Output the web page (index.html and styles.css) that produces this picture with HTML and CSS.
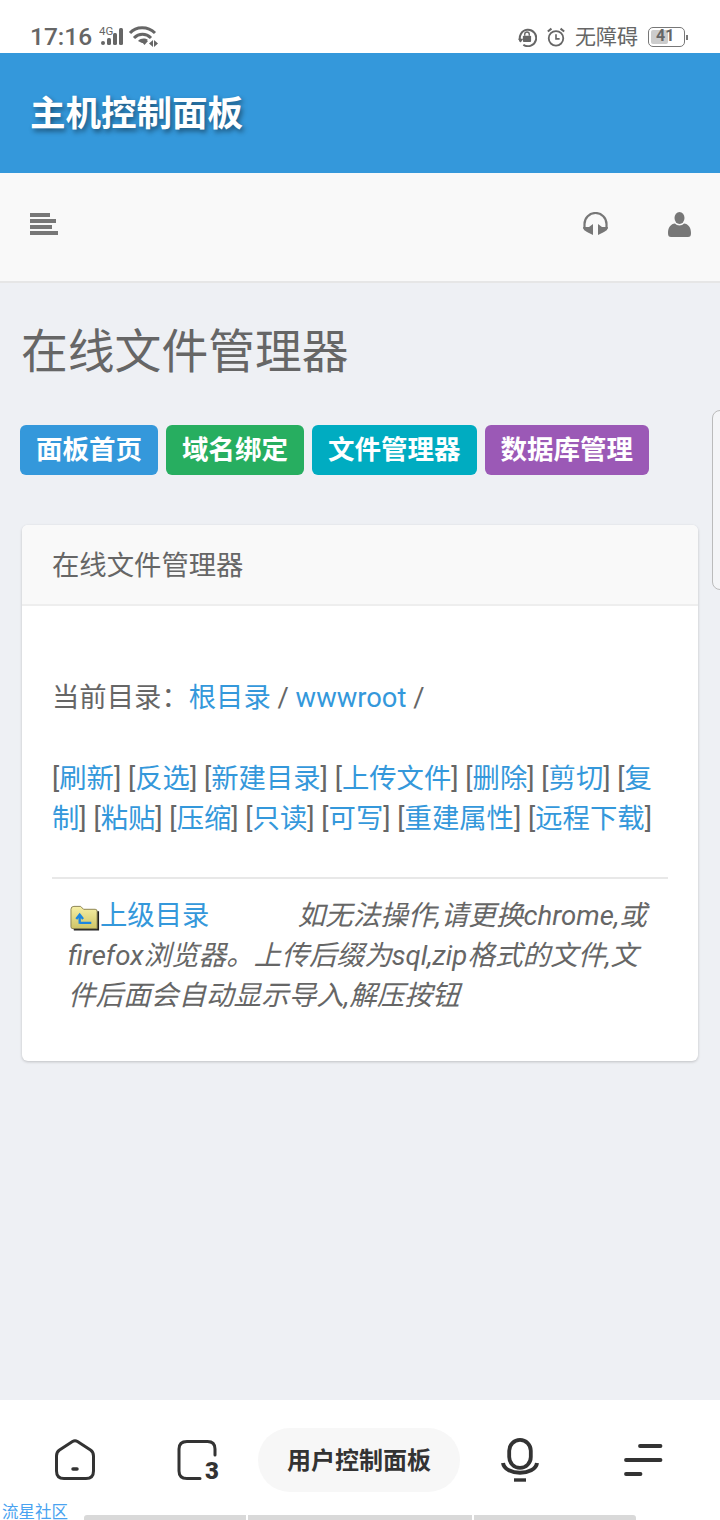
FILE: index.html
```html
<!DOCTYPE html>
<html lang="zh-CN">
<head>
    <meta charset="UTF-8">
    <meta name="viewport" content="width=device-width, initial-scale=1.0">
    <title>主机控制面板</title>
    <link rel="stylesheet" href="styles.css">
</head>
<body>

    <!-- 状态栏 -->
    <div class="status-bar">
        <div class="status-left">
            <span class="status-time">17:16</span>
            <svg class="icon-signal" width="26" height="24" viewBox="0 0 26 24">
                <text x="0" y="9.500" class="signal-label">4G</text>
                <g fill="#666">
                    <rect x="2" y="16" width="4" height="4" rx="2"/>
                    <rect x="8" y="13" width="4" height="7" rx="1.500"/>
                    <rect x="14" y="8" width="4" height="12" rx="1.500"/>
                    <rect x="20" y="3" width="4" height="17" rx="1.500"/>
                </g>
            </svg>
            <svg class="icon-wifi" width="30" height="24" viewBox="0 0 30 24">
                <g fill="none" stroke="#666" stroke-width="3">
                    <path d="M2 8 C8 1 20 1 27 8"/>
                    <path d="M6 13 C11 8 18 8 23 13"/>
                </g>
                <path d="M10 16 C13 13 17 13 20 15 L16 18 H14z" fill="#666"/>
                <path d="M13 16 h7 l-3.500 4z" fill="#666"/>
                <path d="M25 15 v7 l-4 -3.500z M26 15 v7 l4 -3.500z" fill="#666"/>
            </svg>
        </div>
        <div class="status-right">
            <svg width="20" height="20" viewBox="0 0 22 22">
                <path d="M4 16 A9 9 0 1 1 7 19.500" fill="none" stroke="#666" stroke-width="2.200"/>
                <path d="M1 13 L4 17 L7 13z" fill="#666"/>
                <rect x="6.500" y="9.500" width="9" height="7" rx="1" fill="#666"/>
                <path d="M8.500 9.500 V8 a2.500 2.500 0 0 1 5 0 V9.500" fill="none" stroke="#666" stroke-width="1.500"/>
            </svg>
            <svg width="20" height="20" viewBox="0 0 22 22">
                <circle cx="11" cy="12.500" r="8" fill="none" stroke="#666" stroke-width="2"/>
                <path d="M11 8 V13 H15" fill="none" stroke="#666" stroke-width="1.800"/>
                <path d="M2 5 L6 1.800 M20 5 L16 1.800" stroke="#666" stroke-width="2.200"/>
            </svg>
            <span class="status-access">无障碍</span>
            <div class="battery">
                <div class="battery-body">
                    <div class="battery-fill"></div>
                    <span class="battery-num">41</span>
                </div>
                <div class="battery-tip"></div>
            </div>
        </div>
    </div>

    <div class="site-header">主机控制面板</div>

    <div class="toolbar">
        <svg width="28" height="22" viewBox="0 0 28 22" fill="#777">
            <rect x="0" y="0" width="20" height="4"/>
            <rect x="0" y="6" width="26" height="4"/>
            <rect x="0" y="12" width="22" height="4"/>
            <rect x="0" y="18" width="28" height="4"/>
        </svg>
        <div class="toolbar-right">
            <svg width="27" height="24" viewBox="0 0 27 24">
                <path d="M2.500 17 V12 a11 11 0 0 1 22 0 V17" fill="none" stroke="#777" stroke-width="2.200"/>
                <path d="M1 15 L2 18 L5 20 L11 23 V12 L7 15z M26 15 L25 18 L22 20 L16 23 V12 L20 15z" fill="#777"/>
            </svg>
            <svg width="23" height="25" viewBox="0 0 23 25" fill="#777">
                <ellipse cx="11.500" cy="6" rx="5" ry="6"/>
                <path d="M0 21 C0 15 3 12 7 11.500 C9 14 14 14 16 11.500 C20 12 23 15 23 21 C23 24 22 25 20 25 H3 C1 25 0 24 0 21z"/>
            </svg>
        </div>
    </div>

    <div class="main">
        <h1 class="page-title">在线文件管理器</h1>

        <div class="btn-row">
            <a href="#" class="btn btn-blue">面板首页</a>
            <a href="#" class="btn btn-green">域名绑定</a>
            <a href="#" class="btn btn-cyan">文件管理器</a>
            <a href="#" class="btn btn-purple">数据库管理</a>
        </div>

        <div class="card">
            <div class="card-head">在线文件管理器</div>
            <div class="card-body">
                <p class="path-line">当前目录：<a href="#">根目录</a> / <a href="#">wwwroot</a> /</p>
                <p class="action-line">[<a href="#">刷新</a>] [<a href="#">反选</a>] [<a href="#">新建目录</a>] [<a href="#">上传文件</a>] [<a href="#">删除</a>] [<a href="#">剪切</a>] [<a href="#">复制</a>] [<a href="#">粘贴</a>] [<a href="#">压缩</a>] [<a href="#">只读</a>] [<a href="#">可写</a>] [<a href="#">重建属性</a>] [<a href="#">远程下载</a>]</p>
                <div class="divider"></div>
                <p class="tip-line">
                    <svg class="folder-icon" width="30" height="28" viewBox="0 0 31 28">
                        <defs>
                            <linearGradient id="folderFill" x1="0" y1="0" x2="0" y2="1">
                                <stop offset="0" stop-color="#f6efa6"/>
                                <stop offset="1" stop-color="#cfc566"/>
                            </linearGradient>
                        </defs>
                        <path d="M2 7 H30 V27 H4z" fill="#222"/>
                        <path d="M1 5 Q1 2 4 2 H11 L14 5 H26 Q28 5 28 7 V25 H3 Q1 25 1 23z" fill="url(#folderFill)" stroke="#8a8250"/>
                        <path d="M10 20 V12 M6.500 15 L10 10.500 L13.500 15 M10 19 H22" fill="none" stroke="#1c86e0" stroke-width="2.400"/>
                    </svg><a href="#">上级目录</a><em>&nbsp;&nbsp;&nbsp;&nbsp;&nbsp;&nbsp;&nbsp;&nbsp;&nbsp;&nbsp;&nbsp;&nbsp;&nbsp;如无法操作,请更换chrome,或firefox浏览器。上传后缀为sql,zip格式的文件,文件后面会自动显示导入,解压按钮</em>
                </p>
            </div>
        </div>
    </div>

    <div class="side-handle"></div>

    <!-- 底部浏览器栏 -->
    <div class="bottom-bar">
        <div class="bottom-icons">
            <div class="icon-group">
                <svg width="44" height="44" viewBox="0 0 44 44">
                    <path d="M19.500 3.500 Q22 2 24.500 3.500 L37.500 12 Q40.500 14 40.500 18 V33 Q40.500 40.500 33 40.500 H11 Q3.500 40.500 3.500 33 V18 Q3.500 14 6.500 12z" fill="none" stroke="#333" stroke-width="3"/>
                    <path d="M20 31 H24" stroke="#333" stroke-width="3.500" stroke-linecap="round"/>
                </svg>
                <svg width="44" height="44" viewBox="0 0 44 44">
                    <path d="M24 40.500 H11 Q3 40.500 3 33 V11 Q3 3.500 11 3.500 H31.500 Q39 3.500 39 11 V17" fill="none" stroke="#333" stroke-width="3" stroke-linecap="round"/>
                    <text x="29" y="41" class="tab-count">3</text>
                </svg>
            </div>
            <div class="url-pill">用户控制面板</div>
            <div class="icon-group">
                <svg width="44" height="44" viewBox="0 0 44 44">
                    <rect x="11.200" y="1.900" width="21.600" height="28" rx="10.800" fill="none" stroke="#333" stroke-width="3.800"/>
                    <path d="M5 25 C7 38 37 38 39 25" fill="none" stroke="#333" stroke-width="4"/>
                    <path d="M16 42 H28" stroke="#333" stroke-width="3.400"/>
                </svg>
                <svg width="44" height="44" viewBox="0 0 44 44">
                    <path d="M19 8 H39.500 M5 22 H39.500 M5 36 H19.500" stroke="#333" stroke-width="3.800" stroke-linecap="round"/>
                </svg>
            </div>
        </div>
        <div class="bottom-tail">
            <span class="brand-mark">流星社区</span>
            <div class="progress">
                <div class="progress-seg seg-a"></div>
                <div class="progress-seg seg-b"></div>
                <div class="progress-seg seg-c"></div>
            </div>
        </div>
    </div>

</body>
</html>
```

FILE: styles.css
```css
* {
    box-sizing: border-box;
}
body {
    margin: 0;
    height: 1520px;
    display: flex;
    flex-direction: column;
    position: relative;
    overflow: hidden;
    font-family: Roboto, "Noto Sans CJK SC", sans-serif;
    font-size: 27.35px;
    line-height: 40px;
    color: #666;
    background-color: #eef0f4;
}
a {
    color: #3498db;
    text-decoration: none;
}

/* 状态栏 */
.status-bar {
    height: 53px;
    padding: 21px 32px 0 30px;
    background-color: #fff;
    display: flex;
    justify-content: space-between;
    flex-shrink: 0;
}
.status-left, .status-right {
    display: flex;
    align-items: center;
    height: 32px;
}
.status-time {
    font-size: 24.5px;
    font-weight: 500;
    color: #666;
    margin-right: 7px;
}
.icon-signal {
    margin-right: 3px;
}
.signal-label {
    font-family: Roboto, sans-serif;
    font-size: 11.5px;
    fill: #666;
}
.status-right svg {
    margin-right: 9px;
}
.status-access {
    font-size: 21px;
    color: #666;
    margin-right: 10px;
}
.battery {
    display: flex;
    align-items: center;
}
.battery-body {
    width: 37px;
    height: 20px;
    border: 1.5px solid #777;
    border-radius: 5px;
    padding: 1.5px;
    position: relative;
}
.battery-fill {
    width: 17px;
    height: 14px;
    background-color: #ccc;
    border-radius: 2px;
}
.battery-num {
    position: absolute;
    left: 7px;
    top: -1px;
    font-size: 16px;
    line-height: 18px;
    font-weight: 700;
    color: #666;
}
.battery-tip {
    width: 2px;
    height: 5px;
    margin-left: 1px;
    background-color: #777;
}

.site-header {
    height: 120px;
    flex-shrink: 0;
    padding-left: 30px;
    background-color: #3498db;
    color: #fff;
    font-size: 35.5px;
    font-weight: 700;
    line-height: 123px;
    text-shadow: 2px 3px 5px rgba(0, 0, 0, 0.45);
}

.toolbar {
    height: 110px;
    flex-shrink: 0;
    padding: 0 29px 6px 30px;
    background-color: #f9f9f9;
    border-bottom: 2px solid #e6e6e6;
    display: flex;
    align-items: center;
    justify-content: space-between;
}
.toolbar-right {
    display: flex;
    align-items: center;
    gap: 59px;
}

.main {
    flex: 1;
    padding: 0 22px;
}
.page-title {
    margin: 36px 0 0 -1px;
    font-size: 46.8px;
    font-weight: 400;
    line-height: 66px;
    color: #666;
}
.btn-row {
    margin: 40px 0 0 -2px;
    display: flex;
    gap: 8px;
}
.btn {
    height: 50px;
    padding: 0 16px;
    border-radius: 6px;
    color: #fff;
    font-size: 26.5px;
    font-weight: 700;
    line-height: 50px;
}
.btn-blue { background-color: #3498db; }
.btn-green { background-color: #27ae60; }
.btn-cyan { background-color: #00acc1; }
.btn-purple { background-color: #9b59b6; }

.card {
    margin-top: 50px;
    height: 536px;
    background-color: #fff;
    border-radius: 6px;
    box-shadow: 0 1px 3px rgba(0, 0, 0, 0.2);
}
.card-head {
    height: 81px;
    padding-left: 30px;
    background-color: #f9f9f9;
    border-bottom: 2px solid #eee;
    border-radius: 6px 6px 0 0;
    line-height: 83px;
    color: #666;
}
.card-body {
    padding: 72px 30px 0 30px;
}
.card-body p {
    margin: 0;
}
.card-body .action-line {
    margin-top: 41px;
}
.divider {
    margin-top: 38px;
    height: 2px;
    background-color: #e8e8e8;
}
.card-body .tip-line {
    margin-top: 17px;
    padding: 0 4px 0 16px;
}
.tip-line em {
    font-size: 27.6px;
    font-style: italic;
    color: #666;
}
.folder-icon {
    vertical-align: -7px;
    margin-left: 2px;
}

.side-handle {
    position: absolute;
    left: 712px;
    top: 410px;
    width: 20px;
    height: 180px;
    border: 1px solid #bbb;
    border-radius: 8px;
    background-color: #f4f5f7;
}

/* 底部浏览器栏 */
.bottom-bar {
    height: 120px;
    flex-shrink: 0;
    background-color: #fff;
    position: relative;
}
.bottom-icons {
    padding: 28px 0 0 53px;
    display: flex;
    align-items: center;
    gap: 38px;
}
.icon-group {
    display: flex;
    gap: 79px;
}
.url-pill {
    width: 202px;
    height: 64px;
    border-radius: 32px;
    background-color: #f7f7f7;
    color: #333;
    font-size: 24px;
    font-weight: 700;
    line-height: 66px;
    text-align: center;
}
.tab-count {
    font-family: Roboto, sans-serif;
    font-size: 24px;
    font-weight: 900;
    fill: #333;
}
.bottom-tail {
    position: absolute;
    left: 0;
    right: 0;
    bottom: 0;
    height: 20px;
    display: flex;
    padding-left: 2px;
}
.brand-mark {
    width: 82px;
    font-size: 16.5px;
    line-height: 26px;
    color: #4aa3f0;
}
.progress {
    display: flex;
    align-items: flex-end;
    gap: 2px;
    height: 20px;
}
.progress-seg {
    height: 5px;
    background-color: #d9d9d9;
}
.seg-a { width: 162px; border-radius: 3px 0 0 0; }
.seg-b { width: 224px; }
.seg-c { width: 162px; border-radius: 0 3px 0 0; }
```
